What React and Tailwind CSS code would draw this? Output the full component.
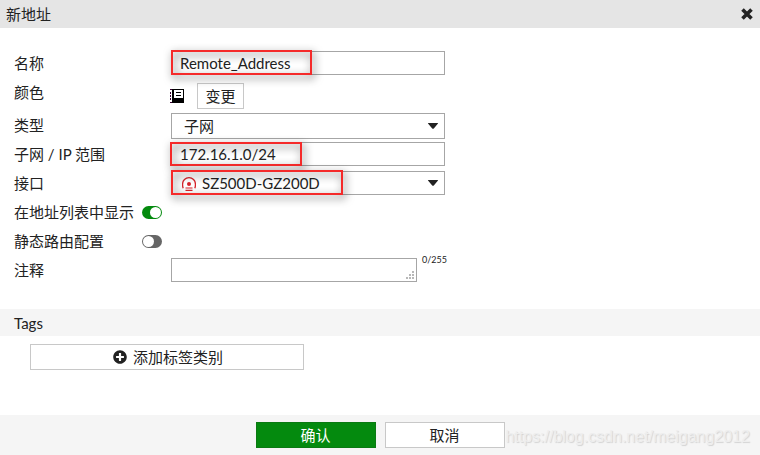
import React, { useState } from "react";
import { FaPlusCircle } from "react-icons/fa";

const inputClass =
  "block w-full h-6 border border-[#a6a6a6] bg-white pl-2 outline-none";
const selectClass =
  "block w-full appearance-none border border-[#a6a6a6] bg-white outline-none";
const buttonClass = "h-[26px] border border-[#c8c8c8] bg-white cursor-pointer";

function Row({ label, htmlFor, children }) {
  return (
    <div className="flex items-start min-h-[29px]">
      <label htmlFor={htmlFor} className="w-[157px] shrink-0 leading-[29px]">
        {label}
      </label>
      {children}
    </div>
  );
}

function ToggleRow({ label, id, checked, onChange }) {
  return (
    <div className="flex items-center h-[29px]">
      <label htmlFor={id} className="w-32 shrink-0 leading-[29px]">
        {label}
      </label>
      <span className="relative flex">
        <input
          id={id}
          type="checkbox"
          checked={checked}
          onChange={onChange}
          className="peer appearance-none w-5 h-[13px] rounded-full bg-[#666666] checked:bg-[#048a0e] cursor-pointer"
        />
        <span className="absolute top-px left-px size-[11px] rounded-full bg-white pointer-events-none peer-checked:left-2"></span>
      </span>
    </div>
  );
}

function Caret() {
  return (
    <svg
      className="absolute right-1.5 top-1/2 -translate-y-1/2 w-3 h-1.5 pointer-events-none"
      viewBox="0 0 12 6"
      fill="#222222"
    >
      <path d="M1.5 0h9q1 0 .3.8L7 5.2Q6 6.2 5 5.2L1.2.8Q.5 0 1.5 0z" />
    </svg>
  );
}

/* Red outline drawn over a field */
function Highlight({ className }) {
  return (
    <span
      className={`absolute border-2 border-[#f52a2a] pointer-events-none drop-shadow-[2px_3px_4px_rgba(0,0,0,0.7)] ${className}`}
    ></span>
  );
}

function BookIcon() {
  return (
    <svg
      className="w-[15px] h-3.5 -ml-px shrink-0"
      viewBox="0 0 15 14"
      shapeRendering="crispEdges"
    >
      <path
        d="M0 0h2v1H0zM0 3h1v2H0zM0 6h1v2H0zM0 9h1v2H0zM0 13h2v1H0z"
        fill="#3a0030"
      />
      <path d="M2 0h12v14H2z" fill="#000000" />
      <path d="M4 1h9v8H4z" fill="#ffffff" />
      <path d="M6 3h5v1H6zM6 6h5v1H6z" fill="#000000" />
    </svg>
  );
}

function TunnelIcon() {
  return (
    <svg
      className="absolute left-[11px] top-1.5 w-3.5 h-3.5 pointer-events-none"
      viewBox="0 0 14 14"
      fill="none"
      stroke="#d8232a"
    >
      <path d="M1.2 11.3C.6 9.8.5 8.500.6 7a6.400 6.300 0 0 1 12.800 0c.1 1.500 0 2.800-.6 4.300" strokeWidth="1.300" />
      <circle cx="7" cy="7" r="2" fill="#d8232a" stroke="none" />
      <path d="M3.500 11h7M3.500 13.400h7" strokeWidth="1.100" />
    </svg>
  );
}

function App() {
  const [name, setName] = useState("Remote_Address");
  const [subnet, setSubnet] = useState("172.16.1.0/24");
  const [comment, setComment] = useState("");
  const [showInList, setShowInList] = useState(true);
  const [staticRoute, setStaticRoute] = useState(false);

  return (
    <div className="min-h-screen flex flex-col bg-white text-[15px] leading-5 text-[#222222] font-[Lato,'Noto_Sans_CJK_SC',sans-serif]">

      {/* Title bar */}
      <header className="flex items-center justify-between h-7 pl-1.5 pr-[7px] bg-[#e5e5e5]">
        <h1>新地址</h1>
        <button type="button" aria-label="关闭" className="cursor-pointer">
          <svg className="size-3" viewBox="0 0 12 12" stroke="#222222" strokeWidth="3.6">
            <path d="M1.5 1.5l9 9M10.5 1.5l-9 9" />
          </svg>
        </button>
      </header>

      {/* Address form */}
      <main className="flex-1">
        <div className="px-3.5 pt-[21px]">
          <Row label="名称" htmlFor="name">
            <div className="relative w-full max-w-[274px] pt-0.5">
              <input
                id="name"
                type="text"
                value={name}
                onChange={(e) => setName(e.target.value)}
                className={inputClass}
              />
              <Highlight className="left-0 top-px w-[141px] h-[25px]" />
            </div>
          </Row>

          <Row label="颜色" htmlFor="color">
            <div className="flex items-center gap-3 pt-[5px] pb-0.5">
              <BookIcon />
              <button id="color" type="button" className={`${buttonClass} w-[47px]`}>
                变更
              </button>
            </div>
          </Row>

          <Row label="类型" htmlFor="type">
            <div className="w-full max-w-[274px] pt-0.5">
              <div className="relative">
                <select id="type" className={`${selectClass} h-[26px] pl-3`}>
                  <option>子网</option>
                </select>
                <Caret />
              </div>
            </div>
          </Row>

          <Row label="子网 / IP 范围" htmlFor="subnet">
            <div className="relative w-full max-w-[274px] pt-0.5">
              <input
                id="subnet"
                type="text"
                value={subnet}
                onChange={(e) => setSubnet(e.target.value)}
                className={inputClass}
              />
              <Highlight className="-left-px top-0.5 w-[132px] h-6" />
            </div>
          </Row>

          <Row label="接口" htmlFor="interface">
            <div className="w-full max-w-[274px] pt-0.5">
              <div className="relative">
                <select id="interface" className={`${selectClass} h-6 pl-[30px]`}>
                  <option>SZ500D-GZ200D</option>
                </select>
                <TunnelIcon />
                <Caret />
                <Highlight className="left-0 -top-px w-[172px] h-[25px]" />
              </div>
            </div>
          </Row>

          <ToggleRow
            label="在地址列表中显示"
            id="show"
            checked={showInList}
            onChange={() => setShowInList(!showInList)}
          />
          <ToggleRow
            label="静态路由配置"
            id="route"
            checked={staticRoute}
            onChange={() => setStaticRoute(!staticRoute)}
          />

          <Row label="注释" htmlFor="comment">
            <div className="relative w-full max-w-[246px] pt-0.5">
              <textarea
                id="comment"
                rows={1}
                maxLength={255}
                value={comment}
                onChange={(e) => setComment(e.target.value)}
                className={`${inputClass} resize-none`}
              />
              <svg
                className="absolute right-[3px] bottom-[3px] size-2 pointer-events-none"
                viewBox="0 0 8 8"
                fill="#b8b8b8"
                shapeRendering="crispEdges"
              >
                <path d="M6 0h2v2H6zM3 3h2v2H3zM6 3h2v2H6zM0 6h2v2H0zM3 6h2v2H3zM6 6h2v2H6z" />
              </svg>
            </div>
            <span className="ml-[5px] text-[9px] leading-2">{comment.length}/255</span>
          </Row>
        </div>

        {/* Tags */}
        <h2 className="mt-6 h-[27px] pl-3.5 leading-[29px] bg-[#f5f5f5]">Tags</h2>
        <div className="px-[30px] pt-2">
          <button
            type="button"
            className={`${buttonClass} w-full max-w-[274px] flex items-center justify-center gap-1.5 pl-0.5`}
          >
            <FaPlusCircle className="size-3.5" />
            添加标签类别
          </button>
        </div>
      </main>

      {/* Actions */}
      <footer className="relative flex items-center justify-center gap-[9px] h-10 bg-[#f5f5f5]">
        <button type="submit" className="w-[120px] h-[26px] border border-[#0a7a12] bg-[#048a0e] text-white cursor-pointer">
          确认
        </button>
        <button type="button" className={`${buttonClass} w-[120px]`}>
          取消
        </button>
        <span className="absolute right-2.5 top-3 text-base leading-5 text-[#eeeeee] font-['Liberation_Sans',sans-serif] text-shadow-[1px_1px_1px_#d2d2d2] pointer-events-none">
          https://blog.csdn.net/meigang2012
        </span>
      </footer>
    </div>
  );
}

export default App;
